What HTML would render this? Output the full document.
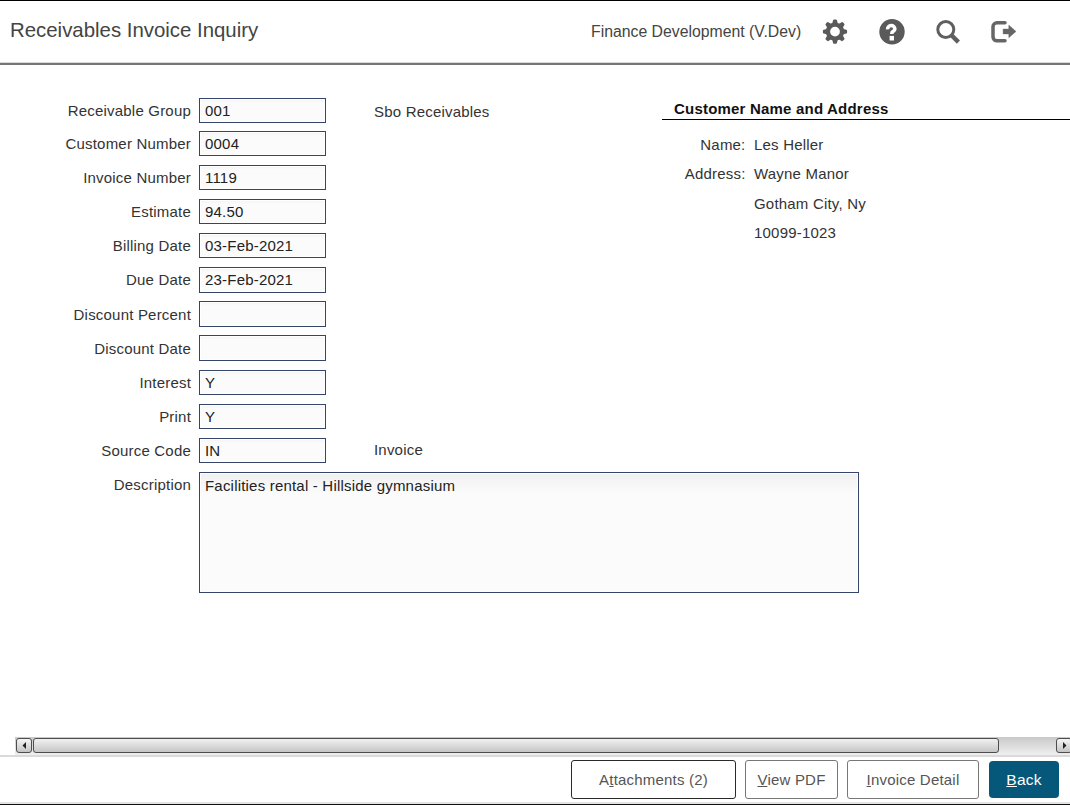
<!DOCTYPE html>
<html><head><meta charset="utf-8">
<style>
html,body{margin:0;padding:0;}
body{width:1070px;height:805px;position:relative;overflow:hidden;background:#fff;font-family:"Liberation Sans",sans-serif;color:#222;letter-spacing:0.2px;}
.a{position:absolute;white-space:nowrap;}
#topline{left:0;top:0;width:1070px;height:1px;background:#000;}
#title{left:10px;top:18px;font-size:20.4px;line-height:24px;color:#444;letter-spacing:0;}
#env{left:591px;top:23px;font-size:15.8px;line-height:18px;color:#444;letter-spacing:0;}
#hdrline{left:0;top:63px;width:1070px;height:2px;background:#767676;box-shadow:0 -1px 0 #d8d8d8;}
.lbl{font-size:15px;line-height:17px;color:#333;text-align:right;width:181px;left:10px;}
.box{left:199px;width:125px;height:23px;border:1px solid #34446a;background:linear-gradient(#f3f3f3,#fbfbfb 4px);box-shadow:inset 0 0 0 1px #fff;}
.val{font-size:15px;line-height:17px;color:#222;left:205px;}
.txt{font-size:15px;line-height:17px;color:#333;}
#ta{left:199px;top:472px;width:658px;height:119px;border:1px solid #34446a;background:linear-gradient(#f0f0f0,#fbfbfb 20px);box-shadow:inset 0 0 0 1px #fff;}
#cnh{left:674px;top:100px;font-size:15px;line-height:17px;font-weight:bold;color:#111;letter-spacing:0.2px;}
#cnline{left:662px;top:119px;width:408px;height:1px;background:#000;}
.nlbl{font-size:15px;line-height:17px;color:#333;text-align:right;width:101.5px;left:644px;}
.nval{font-size:15px;line-height:17px;color:#333;left:754px;}
/* scrollbar */
#track{left:15px;top:737px;width:1055px;height:18px;background:linear-gradient(#c9c9c9,#efefef);}
.sbtn{top:738px;width:14px;height:13px;border:1px solid #4d4d4d;border-radius:3px;background:linear-gradient(#f5f5f5,#c4c4c4);}
#thumb{left:33px;top:738px;width:964px;height:13px;border:1px solid #4d4d4d;border-radius:3px;background:linear-gradient(#f1f1f1,#c6c6c6);}
#sep{left:0;top:755px;width:1070px;height:2px;background:#dadada;}
#botgray{left:0;top:802px;width:1070px;height:2px;background:#e3e3e3;}
#botline{left:0;top:804px;width:1070px;height:1px;background:#111;}
.btn{top:760px;height:37px;border:1px solid #777;border-radius:3px;background:#fff;font-size:15px;line-height:37px;color:#555;text-align:center;}
.btn u{text-decoration:underline;text-decoration-thickness:1px;}
#back{left:989px;top:761px;width:70px;height:37px;border-radius:4px;background:#05587a;color:#fff;font-size:15.5px;line-height:37px;text-align:center;}
</style></head><body>
<div class="a" id="topline"></div>
<div class="a" id="title">Receivables Invoice Inquiry</div>
<div class="a" id="env">Finance Development (V.Dev)</div>
<!-- icons -->
<svg class="a" style="left:815px;top:12px" width="220" height="40" viewBox="0 0 220 40">
  <!-- gear -->
  <g fill="#5a5a5a" transform="translate(20,19.6)">
    <g id="tooth"><path d="M-2.9,-7.5L-1.95,-11.3Q-1.75,-12.1 -0.95,-12.1H0.95Q1.75,-12.1 1.95,-11.3L2.9,-7.5z"/></g>
    <use href="#tooth" transform="rotate(45)"/>
    <use href="#tooth" transform="rotate(90)"/>
    <use href="#tooth" transform="rotate(135)"/>
    <use href="#tooth" transform="rotate(180)"/>
    <use href="#tooth" transform="rotate(225)"/>
    <use href="#tooth" transform="rotate(270)"/>
    <use href="#tooth" transform="rotate(315)"/>
    <path fill-rule="evenodd" d="M-9.2,0a9.2,9.2 0 1,0 18.4,0a9.2,9.2 0 1,0 -18.4,0zM-4.9,0a4.9,4.9 0 1,0 9.8,0a4.9,4.9 0 1,0 -9.8,0z"/>
  </g>
  <!-- question circle -->
  <circle cx="77" cy="19.75" r="12.7" fill="#5a5a5a"/>
  <path d="M72.6,17.4A3.65,3.65 0 1,1 79.9,17.1C79.9,19.3 76.8,19.3 76.8,21.2V22" fill="none" stroke="#fff" stroke-width="3.5"/>
  <rect x="74.6" y="23.9" width="4.4" height="4.6" fill="#fff"/>
  <!-- search -->
  <circle cx="130.8" cy="17.5" r="8" fill="none" stroke="#5f5f5f" stroke-width="3"/>
  <path d="M136.3,23L143.4,30.1" stroke="#5f5f5f" stroke-width="4.4" stroke-linecap="butt"/>
  <!-- sign out -->
  <path d="M190,10.75h-8a4,4 0 0,0 -4,4v10.1a4,4 0 0,0 4,4h8" fill="none" stroke="#666" stroke-width="3.5" stroke-linecap="round"/>
  <path d="M188.1,17.1h5.7v-4l7.2,6.3l-7.2,6.3v-3.8h-5.7z" fill="#666" stroke="#666" stroke-width="0.4" stroke-linejoin="round"/>
</svg>
<div class="a" id="hdrline"></div>

<!-- form -->
<div class="a lbl" style="top:102px">Receivable Group</div>
<div class="a box" style="top:98px"></div><div class="a val" style="top:102px">001</div>
<div class="a txt" style="left:374px;top:103px">Sbo Receivables</div>

<div class="a lbl" style="top:135px">Customer Number</div>
<div class="a box" style="top:131px"></div><div class="a val" style="top:135px">0004</div>

<div class="a lbl" style="top:169px">Invoice Number</div>
<div class="a box" style="top:165px"></div><div class="a val" style="top:169px">1119</div>

<div class="a lbl" style="top:203px">Estimate</div>
<div class="a box" style="top:199px"></div><div class="a val" style="top:203px">94.50</div>

<div class="a lbl" style="top:237px">Billing Date</div>
<div class="a box" style="top:233px"></div><div class="a val" style="top:237px">03-Feb-2021</div>

<div class="a lbl" style="top:271px">Due Date</div>
<div class="a box" style="top:267px;height:24px"></div><div class="a val" style="top:271px">23-Feb-2021</div>

<div class="a lbl" style="top:306px">Discount Percent</div>
<div class="a box" style="top:301px;height:24px"></div>

<div class="a lbl" style="top:340px">Discount Date</div>
<div class="a box" style="top:335px;height:24px"></div>

<div class="a lbl" style="top:374px">Interest</div>
<div class="a box" style="top:370px"></div><div class="a val" style="top:374px">Y</div>

<div class="a lbl" style="top:408px">Print</div>
<div class="a box" style="top:404px"></div><div class="a val" style="top:408px">Y</div>

<div class="a lbl" style="top:442px">Source Code</div>
<div class="a box" style="top:438px"></div><div class="a val" style="top:442px">IN</div>
<div class="a txt" style="left:374px;top:441px">Invoice</div>

<div class="a lbl" style="top:476px">Description</div>
<div class="a" id="ta"></div><div class="a val" style="top:477px">Facilities rental - Hillside gymnasium</div>

<!-- customer -->
<div class="a" id="cnh">Customer Name and Address</div>
<div class="a" id="cnline"></div>
<div class="a nlbl" style="top:136px">Name:</div><div class="a nval" style="top:136px">Les Heller</div>
<div class="a nlbl" style="top:165px">Address:</div><div class="a nval" style="top:165px">Wayne Manor</div>
<div class="a nval" style="top:195px">Gotham City, Ny</div>
<div class="a nval" style="top:224px">10099-1023</div>

<!-- scrollbar -->
<div class="a" id="track"></div>
<div class="a sbtn" style="left:16px"></div>
<svg class="a" style="left:16px;top:738px" width="16" height="15"><path d="M6.5,7.5L10,4v7z" fill="#222"/></svg>
<div class="a" id="thumb"></div>
<div class="a sbtn" style="left:1056px"></div>
<svg class="a" style="left:1056px;top:738px" width="16" height="15"><path d="M10.5,7.5L7,4v7z" fill="#222"/></svg>
<div class="a" id="sep"></div>

<!-- footer buttons -->
<div class="a btn" style="left:571px;width:163px;border-color:#2a2a2a">A<u>t</u>tachments (2)</div>
<div class="a btn" style="left:745px;width:91px"><u>V</u>iew PDF</div>
<div class="a btn" style="left:847px;width:130px"><u>I</u>nvoice Detail</div>
<div class="a" id="back"><u style="text-decoration:underline;text-decoration-thickness:1px">B</u>ack</div>
<div class="a" id="botgray"></div>
<div class="a" id="botline"></div>
</body></html>
